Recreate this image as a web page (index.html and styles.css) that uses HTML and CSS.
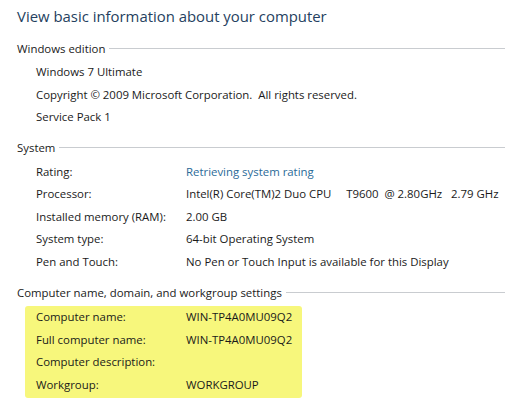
FILE: index.html
```html
<!DOCTYPE html>
<html lang="en">
<head>
    <meta charset="UTF-8">
    <title>System</title>
    <link rel="stylesheet" href="styles.css">
</head>
<body>
    <div class="page">
        <h1 class="title">View basic information about your computer</h1>

        <div class="section">
            <div class="section-head"><span>Windows edition</span></div>
            <div class="rows single">
                <div class="row">Windows 7 Ultimate</div>
                <div class="row">Copyright © 2009 Microsoft Corporation.&nbsp; All rights reserved.</div>
                <div class="row">Service Pack 1</div>
            </div>
        </div>

        <div class="section">
            <div class="section-head"><span>System</span></div>
            <div class="rows">
                <div class="row"><span class="label">Rating:</span><span class="link">Retrieving system rating</span></div>
                <div class="row"><span class="label">Processor:</span><span>Intel(R) Core(TM)2 Duo CPU&nbsp;&nbsp;&nbsp;&nbsp; T9600&nbsp; @ 2.80GHz&nbsp;&nbsp; 2.79 GHz</span></div>
                <div class="row"><span class="label">Installed memory (RAM):</span><span>2.00 GB</span></div>
                <div class="row"><span class="label">System type:</span><span>64-bit Operating System</span></div>
                <div class="row"><span class="label">Pen and Touch:</span><span>No Pen or Touch Input is available for this Display</span></div>
            </div>
        </div>

        <div class="section">
            <div class="section-head"><span>Computer name, domain, and workgroup settings</span></div>
            <div class="rows highlight">
                <div class="row"><span class="label">Computer name:</span><span>WIN-TP4A0MU09Q2</span></div>
                <div class="row"><span class="label">Full computer name:</span><span>WIN-TP4A0MU09Q2</span></div>
                <div class="row"><span class="label">Computer description:</span><span></span></div>
                <div class="row"><span class="label">Workgroup:</span><span>WORKGROUP</span></div>
            </div>
        </div>
    </div>
</body>
</html>
```

FILE: styles.css
```css
*{
  margin: 0;
  padding: 0;
  box-sizing: border-box;
}

body{
  background-color: #fff;
  font-family: "Open Sans", "Noto Sans", sans-serif;
  font-size: 11.4px;
  color: #1a1a1a;
  overflow: hidden;
}

.page{
  padding: 4px 0 0 17px;
}

.title{
  font-size: 14.9px;
  font-weight: normal;
  color: #253f60;
  line-height: 24px;
  margin-bottom: 10px;
}

.section-head{
  display: flex;
  align-items: center;
  height: 20px;
  margin-bottom: 3px;
}

.section-head::after{
  content: "";
  flex: 1;
  border-top: 1px solid #c9ccd0;
  margin-left: 4px;
}

.section{
  margin-bottom: 9px;
}

.rows{
  padding-left: 19px;
}

.row{
  display: grid;
  grid-template-columns: 150px 1fr;
  line-height: 22.5px;
  white-space: nowrap;
}

.rows.single .row{
  display: block;
}

.link{
  color: #2a6a98;
}

.highlight{
  width: 277px;
  margin-left: 8px;
  padding-left: 11px;
  padding-bottom: 2px;
  margin-top: 4px;
  background-color: #f7f77c;
  border-radius: 3px;
}
```
